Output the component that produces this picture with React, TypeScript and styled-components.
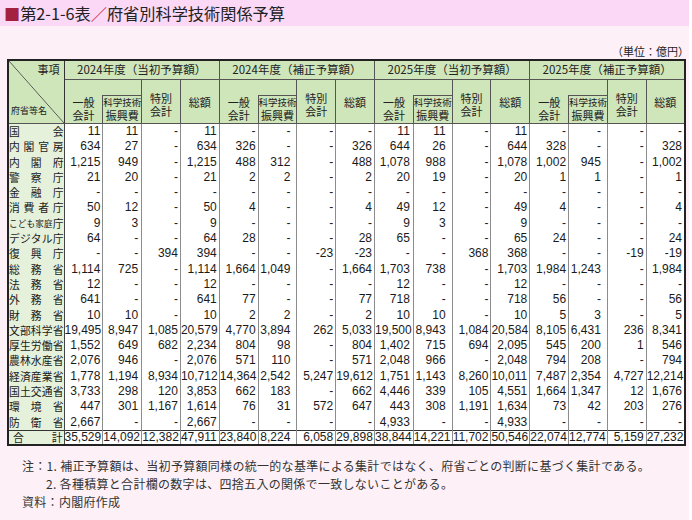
import React from 'react';
import styled, { createGlobalStyle } from 'styled-components';

const GlobalStyle = createGlobalStyle`
  html, body { margin: 0; padding: 0; background: #fff; }
  body { font-family: "Noto Sans CJK JP", sans-serif; color: #222; }
`;

const Page = styled.div`
  width: 689px;
  min-height: 520px;
  background: #fdf1f7;
  display: flex;
  flex-direction: column;
`;

const TitleBar = styled.div`
  height: 26px;
  background: #fbd8f6;
  display: flex;
  align-items: center;
  padding-left: 4px;
  font-family: "Noto Sans CJK JP", sans-serif;
  font-size: 16.2px;
  line-height: 26px;
  color: #222;
  white-space: nowrap;
`;

const Square = styled.span`
  color: #a3213f;
`;

const Slash = styled.span`
  color: #c0283e;
`;

const Body = styled.div`
  padding-left: 7px;
  display: flex;
  flex-direction: column;
`;

const Unit = styled.div`
  margin-top: 17px;
  height: 16px;
  text-align: right;
  font-size: 11px;
  line-height: 16px;
  color: #222;
`;

const Table = styled.table`
  border-collapse: collapse;
  table-layout: fixed;
  width: 679px;
  border: 2px solid #222;
  background: #fff;
  font-family: "Liberation Sans", "Noto Sans CJK JP", sans-serif;
`;

const HeadCell = styled.th<{
  $noRight?: boolean;
  $noLeft?: boolean;
  $valign?: 'top' | 'middle' | 'bottom';
  $padTop?: number;
  $h?: number;
  $size?: number;
}>`
  background: #cfe5ba;
  border: 1px solid #555;
  font-weight: normal;
  font-family: "Noto Sans CJK JP", sans-serif;
  font-size: ${p => p.$size ?? 11}px;
  line-height: 13px;
  padding: ${p => p.$padTop ?? 0}px 0 1px 0;
  text-align: center;
  vertical-align: ${p => p.$valign ?? 'middle'};
  color: #222;
  white-space: nowrap;
  ${p => (p.$h ? `height: ${p.$h}px;` : '')}
  ${p => (p.$noRight ? 'border-right-style: none;' : '')}
  ${p => (p.$noLeft ? 'border-left-style: none;' : '')}
`;

const CornerCell = styled.th`
  background: linear-gradient(
    to top right,
    #cfe5ba calc(50% - 0.7px),
    #555 50%,
    #cfe5ba calc(50% + 0.7px)
  );
  border: 1px solid #555;
  border-right-color: #333;
  padding: 0;
  font-weight: normal;
  font-family: "Noto Sans CJK JP", sans-serif;
  color: #222;
  vertical-align: top;
`;

const CornerInner = styled.div`
  height: 57px;
  display: flex;
  flex-direction: column;
  justify-content: space-between;
`;

const CornerTop = styled.span`
  align-self: flex-end;
  font-size: 11px;
  line-height: 13px;
  padding: 2px 4px 0 0;
`;

const CornerBottom = styled.span`
  align-self: flex-start;
  font-size: 9px;
  line-height: 11px;
  padding: 0 0 2px 2px;
`;

const StackLine = styled.span<{ $size?: number }>`
  display: block;
  font-size: ${p => (p.$size ? `${p.$size}px` : 'inherit')};
  line-height: 13px;
`;

const NumCell = styled.td<{ $pad: number; $total?: boolean }>`
  border-left: 1px solid #8c8c8c;
  border-right: 1px solid #8c8c8c;
  ${p => (p.$total ? 'border-top: 1px solid #333;' : '')}
  text-align: right;
  padding: 0 ${p => p.$pad}px 0 0;
  font-size: 12px;
  height: ${p => (p.$total ? 13.5 : 15.3)}px;
  line-height: ${p => (p.$total ? 13.5 : 15.3)}px;
  white-space: nowrap;
  color: #1a1a1a;
`;

const NameCell = styled.td<{ $total?: boolean }>`
  background: #e6f1dc;
  border-right: 1px solid #444;
  ${p => (p.$total ? 'border-top: 1px solid #333;' : '')}
  padding: 0;
  height: ${p => (p.$total ? 13.5 : 15.3)}px;
`;

const NameInner = styled.div<{ $total?: boolean }>`
  display: flex;
  justify-content: space-between;
  align-items: center;
  padding: ${p => (p.$total ? '0 1px 0 4px' : '0')};
  font-family: "Noto Sans CJK JP", sans-serif;
  font-size: 10.8px;
  line-height: ${p => (p.$total ? 13.5 : 15.3)}px;
  color: #1a1a1a;
  white-space: nowrap;
`;

const NameChar = styled.span<{ $small?: boolean }>`
  display: block;
  font-size: ${p => (p.$small ? '8.6px' : '10.8px')};
`;

const Notes = styled.div`
  margin-top: 11px;
  padding-left: 15px;
  font-family: "Noto Sans CJK JP", sans-serif;
  font-size: 12px;
  line-height: 18px;
  letter-spacing: 0.3px;
  color: #333;
`;

const NoteLine = styled.div<{ $indent?: number }>`
  padding-left: ${p => p.$indent ?? 0}px;
  white-space: nowrap;
`;

const groups = [
  '2024年度（当初予算額）',
  '2024年度（補正予算額）',
  '2025年度（当初予算額）',
  '2025年度（補正予算額）',
];

// right padding per data column (4 groups x 4 columns)
const pads = [2, 3, 2, 2, 2, 6, 2, 2, 3, 6, 2, 2, 2, 6, 2, 2];

type Row = { chars: string[]; small?: number; values: string[] };

const mk = (name: string, values: string[], small?: number): Row => ({
  chars: Array.from(name),
  small,
  values,
});

const rows: Row[] = [
  mk('国会', ['11', '11', '-', '11', '-', '-', '-', '-', '11', '11', '-', '11', '-', '-', '-', '-']),
  mk('内閣官房', ['634', '27', '-', '634', '326', '-', '-', '326', '644', '26', '-', '644', '328', '-', '-', '328']),
  mk('内閣府', ['1,215', '949', '-', '1,215', '488', '312', '-', '488', '1,078', '988', '-', '1,078', '1,002', '945', '-', '1,002']),
  mk('警察庁', ['21', '20', '-', '21', '2', '2', '-', '2', '20', '19', '-', '20', '1', '1', '-', '1']),
  mk('金融庁', ['-', '-', '-', '-', '-', '-', '-', '-', '-', '-', '-', '-', '-', '-', '-', '-']),
  mk('消費者庁', ['50', '12', '-', '50', '4', '-', '-', '4', '49', '12', '-', '49', '4', '-', '-', '4']),
  mk('こども家庭庁', ['9', '3', '-', '9', '-', '-', '-', '-', '9', '3', '-', '9', '-', '-', '-', '-'], 5),
  mk('デジタル庁', ['64', '-', '-', '64', '28', '-', '-', '28', '65', '-', '-', '65', '24', '-', '-', '24']),
  mk('復興庁', ['-', '-', '394', '394', '-', '-', '-23', '-23', '-', '-', '368', '368', '-', '-', '-19', '-19']),
  mk('総務省', ['1,114', '725', '-', '1,114', '1,664', '1,049', '-', '1,664', '1,703', '738', '-', '1,703', '1,984', '1,243', '-', '1,984']),
  mk('法務省', ['12', '-', '-', '12', '-', '-', '-', '-', '12', '-', '-', '12', '-', '-', '-', '-']),
  mk('外務省', ['641', '-', '-', '641', '77', '-', '-', '77', '718', '-', '-', '718', '56', '-', '-', '56']),
  mk('財務省', ['10', '10', '-', '10', '2', '2', '-', '2', '10', '10', '-', '10', '5', '3', '-', '5']),
  mk('文部科学省', ['19,495', '8,947', '1,085', '20,579', '4,770', '3,894', '262', '5,033', '19,500', '8,943', '1,084', '20,584', '8,105', '6,431', '236', '8,341']),
  mk('厚生労働省', ['1,552', '649', '682', '2,234', '804', '98', '-', '804', '1,402', '715', '694', '2,095', '545', '200', '1', '546']),
  mk('農林水産省', ['2,076', '946', '-', '2,076', '571', '110', '-', '571', '2,048', '966', '-', '2,048', '794', '208', '-', '794']),
  mk('経済産業省', ['1,778', '1,194', '8,934', '10,712', '14,364', '2,542', '5,247', '19,612', '1,751', '1,143', '8,260', '10,011', '7,487', '2,354', '4,727', '12,214']),
  mk('国土交通省', ['3,733', '298', '120', '3,853', '662', '183', '-', '662', '4,446', '339', '105', '4,551', '1,664', '1,347', '12', '1,676']),
  mk('環境省', ['447', '301', '1,167', '1,614', '76', '31', '572', '647', '443', '308', '1,191', '1,634', '73', '42', '203', '276']),
  mk('防衛省', ['2,667', '-', '-', '2,667', '-', '-', '-', '-', '4,933', '-', '-', '4,933', '-', '-', '-', '-']),
];

const totalRow: Row = mk('合計', [
  '35,529', '14,092', '12,382', '47,911', '23,840', '8,224', '6,058', '29,898',
  '38,844', '14,221', '11,702', '50,546', '22,074', '12,774', '5,159', '27,232',
]);

const NameContent: React.FC<{ row: Row; total?: boolean }> = ({ row, total }) => (
  <NameInner $total={total}>
    {row.chars.map((c, i) => (
      <NameChar key={`${c}-${i}`} $small={row.small !== undefined && i < row.small}>
        {c}
      </NameChar>
    ))}
  </NameInner>
);

export default function App() {
  return (
    <>
      <GlobalStyle />
      <Page>
        <TitleBar>
          <Square>■</Square>第2-1-6表<Slash>／</Slash>府省別科学技術関係予算
        </TitleBar>
        <Body>
          <Unit>（単位：億円）</Unit>
          <Table>
            <colgroup>
              <col style={{ width: 56 }} />
              {pads.map((_, i) => (
                <col key={i} />
              ))}
            </colgroup>
            <thead>
              <tr>
                <CornerCell rowSpan={3}>
                  <CornerInner>
                    <CornerTop>事項</CornerTop>
                    <CornerBottom>府省等名</CornerBottom>
                  </CornerInner>
                </CornerCell>
                {groups.map(g => (
                  <HeadCell key={g} colSpan={4} $h={17} $size={11.5}>
                    {g}
                  </HeadCell>
                ))}
              </tr>
              <tr>
                {groups.map(g => (
                  <React.Fragment key={g}>
                    <HeadCell rowSpan={2} $noRight $valign="bottom">
                      <StackLine>一般</StackLine>
                      <StackLine>会計</StackLine>
                    </HeadCell>
                    <HeadCell $noLeft $h={14} />
                    <HeadCell rowSpan={2} $padTop={7}>
                      <StackLine>特別</StackLine>
                      <StackLine>会計</StackLine>
                    </HeadCell>
                    <HeadCell rowSpan={2} $padTop={3}>
                      総額
                    </HeadCell>
                  </React.Fragment>
                ))}
              </tr>
              <tr>
                {groups.map(g => (
                  <HeadCell key={g} $valign="bottom" $h={25}>
                    <StackLine $size={9.5}>科学技術</StackLine>
                    <StackLine $size={11}>振興費</StackLine>
                  </HeadCell>
                ))}
              </tr>
            </thead>
            <tbody>
              {rows.map(r => (
                <tr key={r.chars.join('')}>
                  <NameCell>
                    <NameContent row={r} />
                  </NameCell>
                  {r.values.map((v, i) => (
                    <NumCell key={i} $pad={pads[i]}>
                      {v}
                    </NumCell>
                  ))}
                </tr>
              ))}
              <tr>
                <NameCell $total>
                  <NameContent row={totalRow} total />
                </NameCell>
                {totalRow.values.map((v, i) => (
                  <NumCell key={i} $pad={pads[i]} $total>
                    {v}
                  </NumCell>
                ))}
              </tr>
            </tbody>
          </Table>
          <Notes>
            <NoteLine>注：1. 補正予算額は、当初予算額同様の統一的な基準による集計ではなく、府省ごとの判断に基づく集計である。</NoteLine>
            <NoteLine $indent={24}>2. 各種積算と合計欄の数字は、四捨五入の関係で一致しないことがある。</NoteLine>
            <NoteLine>資料：内閣府作成</NoteLine>
          </Notes>
        </Body>
      </Page>
    </>
  );
}
